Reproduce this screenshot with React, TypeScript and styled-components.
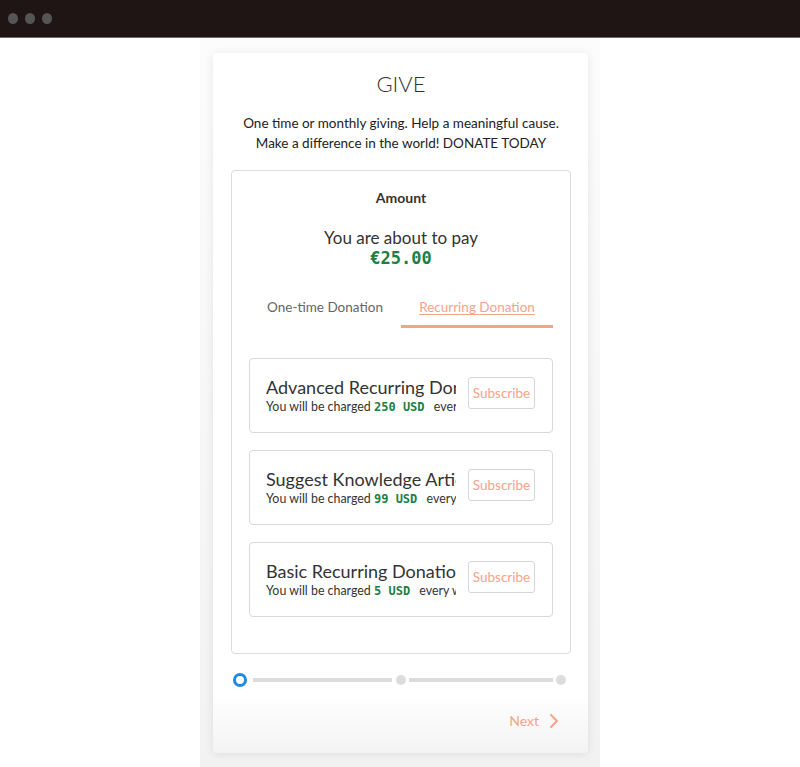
import React, { useState } from 'react'
import styled, { createGlobalStyle } from 'styled-components'

const GlobalStyle = createGlobalStyle`
  body {
    margin: 0;
    background: #fff;
    font-family: Lato, "Open Sans", "Liberation Sans", sans-serif;
    color: #333;
  }
`

const SALMON = '#f8a28b'
const GREEN = '#1b7f48'

const TopBar = styled.div`
  height: 37px;
  background: #1e1514;
  border-bottom: 1px solid #6b6b6b;
  display: flex;
  align-items: center;
  gap: 7px;
  padding-left: 8px;
`

const Light = styled.span`
  width: 10px;
  height: 11px;
  border-radius: 50%;
  background: #555;
`

const Stage = styled.div`
  width: 400px;
  margin: 0 auto;
  box-sizing: border-box;
  padding: 15px 12px 14px 13px;
  background: linear-gradient(#fcfcfc, #f2f2f2);
`

const Card = styled.div`
  height: 700px;
  box-sizing: border-box;
  padding: 18px 17px 0 18px;
  border-radius: 4px;
  background: linear-gradient(#fff 0, #fff 640px, #f3f3f3 700px);
  box-shadow: 0 1px 10px rgba(0, 0, 0, 0.09);
  display: flex;
  flex-direction: column;
`

const Title = styled.h1`
  margin: 0;
  font-size: 22px;
  line-height: 26px;
  font-weight: 300;
  text-align: center;
  color: #333;
`

const Intro = styled.p`
  margin: 16px 0 0;
  font-size: 13.5px;
  line-height: 20px;
  text-align: center;
  color: #222;
`

const Panel = styled.div`
  margin-top: 17px;
  height: 484px;
  box-sizing: border-box;
  border: 1px solid #dcdcdc;
  border-radius: 4px;
  padding: 17px 17px 0;
  display: flex;
  flex-direction: column;
`

const Label = styled.div`
  font-size: 14px;
  line-height: 20px;
  font-weight: 700;
  text-align: center;
  color: #333;
`

const PayLine = styled.div`
  margin-top: 19px;
  font-size: 17px;
  line-height: 21px;
  text-align: center;
  color: #333;
`

const Price = styled.div`
  font-family: "DejaVu Sans Mono", "Liberation Mono", monospace;
  font-weight: 700;
  font-size: 17px;
  line-height: 21px;
  text-align: center;
  color: ${GREEN};
`

const Tabs = styled.div`
  margin-top: 19px;
  display: grid;
  grid-template-columns: 1fr 1fr;
`

const Tab = styled.button<{ $active?: boolean }>`
  background: none;
  border: none;
  border-bottom: 3px solid ${p => (p.$active ? SALMON : 'transparent')};
  padding: 10px 0 9px;
  font-family: inherit;
  font-size: 13.5px;
  line-height: 18px;
  color: ${p => (p.$active ? SALMON : '#666')};
  text-decoration: ${p => (p.$active ? 'underline' : 'none')};
  text-underline-offset: 2px;
  cursor: pointer;
`

const Plans = styled.div`
  margin-top: 30px;
  display: flex;
  flex-direction: column;
  gap: 17px;
`

const Plan = styled.div`
  height: 75px;
  box-sizing: border-box;
  border: 1px solid #d9d9d9;
  border-radius: 4px;
  padding: 0 17px 0 16px;
  display: flex;
  align-items: center;
  gap: 12px;
`

const PlanText = styled.div`
  width: 190px;
  overflow: hidden;
  white-space: nowrap;
`

const PlanName = styled.div`
  font-size: 18px;
  line-height: 21px;
  color: #333;
`

const PlanNote = styled.div`
  margin-top: 1px;
  font-size: 12.4px;
  line-height: 16px;
  color: #333;
`

const Money = styled.span`
  font-family: "DejaVu Sans Mono", "Liberation Mono", monospace;
  font-weight: 700;
  font-size: 12px;
  color: ${GREEN};
  margin-right: 6px;
`

const Subscribe = styled.button`
  width: 67px;
  height: 32px;
  margin-bottom: 5px;
  padding: 0;
  background: #fff;
  border: 1px solid #d6d6d6;
  border-radius: 3px;
  font-family: inherit;
  font-size: 13.5px;
  color: ${SALMON};
  cursor: pointer;
`

const Steps = styled.div`
  margin-top: 19px;
  padding: 0 5px 0 2px;
  display: flex;
  align-items: center;
`

const StepRing = styled.span`
  width: 14px;
  height: 14px;
  box-sizing: border-box;
  border: 3px solid #1e88e5;
  border-radius: 50%;
  flex: none;
`

const StepDot = styled.span`
  width: 10px;
  height: 10px;
  border-radius: 50%;
  background: #dcdcdc;
  flex: none;
`

const StepLine = styled.span<{ $grow: number; $left: number; $right: number }>`
  flex: ${p => p.$grow} 1 0;
  height: 4px;
  background: #dedcdb;
  margin: 0 ${p => p.$right}px 0 ${p => p.$left}px;
`

const Footer = styled.div`
  margin-top: 24px;
  display: flex;
  justify-content: flex-end;
  align-items: center;
  gap: 10px;
  padding-right: 12px;
  font-size: 14px;
  line-height: 20px;
  color: ${SALMON};
`

const plans = [
  { name: 'Advanced Recurring Donation', amount: '250', cycle: 'every month' },
  { name: 'Suggest Knowledge Article', amount: '99', cycle: 'every month' },
  { name: 'Basic Recurring Donation', amount: '5', cycle: 'every week' },
]

const App = () => {
  const [tab, setTab] = useState(1)

  return (
    <>
      <GlobalStyle />
      <TopBar>
        <Light />
        <Light />
        <Light />
      </TopBar>
      <Stage>
        <Card>
          <Title>GIVE</Title>
          <Intro>
            One time or monthly giving. Help a meaningful cause.
            <br />
            Make a difference in the world! DONATE TODAY
          </Intro>
          <Panel>
            <Label>Amount</Label>
            <PayLine>You are about to pay</PayLine>
            <Price>€25.00</Price>
            <Tabs>
              <Tab $active={tab === 0} onClick={() => setTab(0)}>One-time Donation</Tab>
              <Tab $active={tab === 1} onClick={() => setTab(1)}>Recurring Donation</Tab>
            </Tabs>
            <Plans>
              {plans.map(plan => (
                <Plan key={plan.name}>
                  <PlanText>
                    <PlanName>{plan.name}</PlanName>
                    <PlanNote>
                      You will be charged <Money>{plan.amount} USD</Money> {plan.cycle}
                    </PlanNote>
                  </PlanText>
                  <Subscribe>Subscribe</Subscribe>
                </Plan>
              ))}
            </Plans>
          </Panel>
          <Steps>
            <StepRing />
            <StepLine $grow={139} $left={6} $right={4} />
            <StepDot />
            <StepLine $grow={144} $left={3} $right={3} />
            <StepDot />
          </Steps>
          <Footer>
            Next
            <svg width="10" height="16" viewBox="0 0 10 16" fill="none">
              <path d="M2 2l6 6-6 6" stroke={SALMON} strokeWidth="2" strokeLinecap="round" strokeLinejoin="round" />
            </svg>
          </Footer>
        </Card>
      </Stage>
    </>
  )
}

export default App
